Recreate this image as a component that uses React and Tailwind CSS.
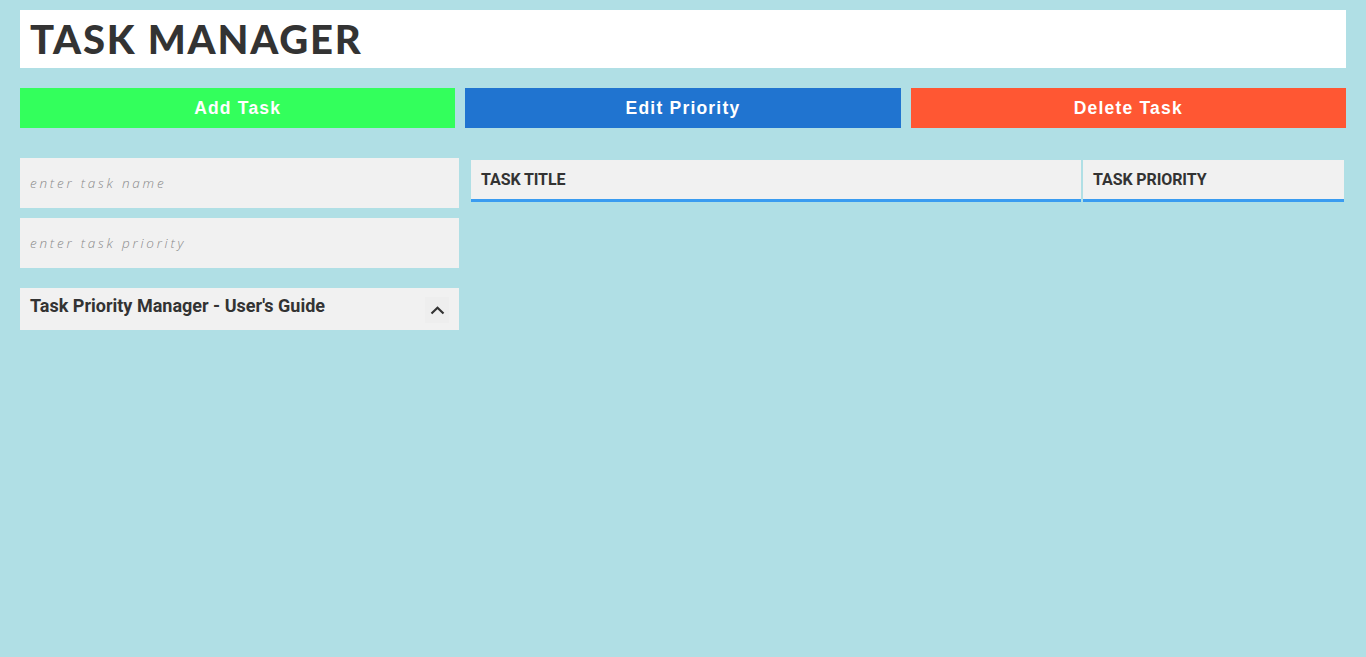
import { useState } from "react";

const App = () => {
    const [taskName, setTaskName] = useState("");
    const [taskPriority, setTaskPriority] = useState("");
    const [guideOpen, setGuideOpen] = useState(false);

    return (
        <div className="min-h-screen bg-[#b0dfe5] p-[20px] pt-[10px]">
            <div className="bg-white h-[58px] flex items-center px-[10px]">
                <h1 className="font-['Lato',sans-serif] font-black text-[40px] text-[#333333] leading-none tracking-[1.8px]">
                    TASK MANAGER
                </h1>
            </div>

            <div className="flex gap-[10px] mt-[20px]">
                <button className="flex-1 h-[40px] bg-[#33ff5c] text-white font-['Liberation_Sans',Arial,sans-serif] font-bold text-[17.5px] tracking-[1.2px]">
                    Add Task
                </button>
                <button className="flex-1 h-[40px] bg-[#2074d0] text-white font-['Liberation_Sans',Arial,sans-serif] font-bold text-[17.5px] tracking-[1.2px]">
                    Edit Priority
                </button>
                <button className="flex-1 h-[40px] bg-[#ff5733] text-white font-['Liberation_Sans',Arial,sans-serif] font-bold text-[17.5px] tracking-[1.2px]">
                    Delete Task
                </button>
            </div>

            <div className="flex gap-[10px] mt-[30px]">
                <div className="w-[439px] flex flex-col gap-[10px]">
                    <input
                        type="text"
                        value={taskName}
                        onChange={(e) => setTaskName(e.target.value)}
                        placeholder="enter task name"
                        className="h-[50px] bg-[#f1f1f1] px-[10px] outline-none font-['Open_Sans',sans-serif] italic font-light text-[13.5px] tracking-[2.8px] text-[#333] placeholder:text-[#8a8a8a]"
                    />
                    <input
                        type="text"
                        value={taskPriority}
                        onChange={(e) => setTaskPriority(e.target.value)}
                        placeholder="enter task priority"
                        className="h-[50px] bg-[#f1f1f1] px-[10px] outline-none font-['Open_Sans',sans-serif] italic font-light text-[13.5px] tracking-[2.8px] text-[#333] placeholder:text-[#8a8a8a]"
                    />
                    <div className="mt-[10px] bg-[#f1f1f1]">
                        <button
                            onClick={() => setGuideOpen(!guideOpen)}
                            className="w-full h-[42px] flex items-start justify-between pl-[10px] pr-[10px] pt-[7px]"
                        >
                            <span className="font-['Roboto',sans-serif] font-bold text-[18px] text-[#333333] leading-[22px]">
                                Task Priority Manager - User's Guide
                            </span>
                            <span className="w-[24px] h-[26px] mt-[2px] bg-[#eeeeee] flex items-center justify-center">
                                <svg width="15" height="9" viewBox="0 0 15 9" fill="none">
                                    <path d="M1.5 7.5 L7.5 1.8 L13.5 7.5" stroke="#333333" strokeWidth="2.2" />
                                </svg>
                            </span>
                        </button>
                        {guideOpen && (
                            <div className="px-[10px] pb-[10px] font-['Roboto',sans-serif] text-[14px] text-[#333333]">
                                Enter a task name and priority, then use the buttons above.
                            </div>
                        )}
                    </div>
                </div>

                <div className="flex-1">
                    <table className="w-full border-separate border-spacing-[2px]">
                        <thead>
                            <tr>
                                <th className="w-[610px] h-[42px] bg-[#f1f1f1] border-b-[3px] border-[#3a9cf0] text-left px-[10px] font-['Roboto',sans-serif] font-bold text-[16px] text-[#333333] tracking-[-0.1px]">
                                    TASK TITLE
                                </th>
                                <th className="h-[42px] bg-[#f1f1f1] border-b-[3px] border-[#3a9cf0] text-left px-[10px] font-['Roboto',sans-serif] font-bold text-[16px] text-[#333333] tracking-[-0.1px]">
                                    TASK PRIORITY
                                </th>
                            </tr>
                        </thead>
                        <tbody></tbody>
                    </table>
                </div>
            </div>
        </div>
    );
};

export default App;
